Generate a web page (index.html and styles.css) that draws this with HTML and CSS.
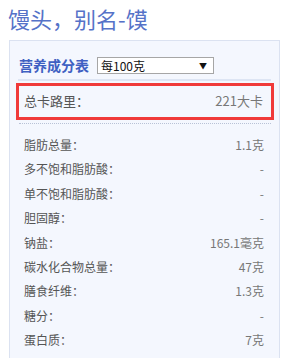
FILE: index.html
```html
<!DOCTYPE html>
<html lang="zh">
<head>
<meta charset="utf-8">
<link rel="stylesheet" href="styles.css">
</head>
<body>
<h1 class="title">馒头，别名-馍</h1>
<div class="card">
  <div class="card-head">
    <span class="head-label">营养成分表</span>
    <div class="select">
      <span>每100克</span>
      <span class="arrow">▼</span>
    </div>
  </div>
  <div class="total">
    <span class="label">总卡路里：</span>
    <span class="value">221大卡</span>
  </div>
  <div class="rows">
    <div class="row"><span class="label">脂肪总量：</span><span class="value">1.1克</span></div>
    <div class="row"><span class="label">多不饱和脂肪酸：</span><span class="value">-</span></div>
    <div class="row"><span class="label">单不饱和脂肪酸：</span><span class="value">-</span></div>
    <div class="row"><span class="label">胆固醇：</span><span class="value">-</span></div>
    <div class="row"><span class="label">钠盐：</span><span class="value">165.1毫克</span></div>
    <div class="row"><span class="label">碳水化合物总量：</span><span class="value">47克</span></div>
    <div class="row"><span class="label">膳食纤维：</span><span class="value">1.3克</span></div>
    <div class="row"><span class="label">糖分：</span><span class="value">-</span></div>
    <div class="row"><span class="label">蛋白质：</span><span class="value">7克</span></div>
  </div>
</div>
</body>
</html>
```
FILE: styles.css
```css
* { box-sizing: border-box; }
html, body { margin: 0; padding: 0; background: #fff; }
body {
  font-family: "Noto Sans CJK SC", "Noto Sans", sans-serif;
  width: 287px;
  height: 358px;
  overflow: hidden;
}
.title {
  margin: 0;
  padding: 4px 0 0 8px;
  height: 40px;
  font-size: 22px;
  line-height: 28px;
  font-weight: normal;
  color: #5572c8;
}
.card {
  margin-left: 9px;
  width: 271px;
  height: 318px;
  border: 1px solid #dbe2f1;
  border-bottom: none;
  background: #f4f7fe;
  padding: 0 8px;
}
.card-head {
  display: flex;
  align-items: center;
  padding: 16px 0 5px 1px;
  border-bottom: 2px solid #dde5f4;
}
.head-label {
  font-size: 14px;
  line-height: 17px;
  font-weight: bold;
  color: #3f60c2;
  margin-right: 8px;
}
.select {
  width: 117px;
  height: 17px;
  border: 1px solid #a6a6a6;
  background: #fff;
  display: flex;
  align-items: center;
  justify-content: space-between;
  padding: 0 6px 0 3px;
  font-size: 12px;
  line-height: 15px;
  color: #111;
}
.arrow { font-size: 8px; color: #111; }
.total {
  margin: 2px 0 0 -2px;
  width: 258px;
  height: 37px;
  border: 3px solid #f03a3a;
  display: flex;
  align-items: center;
  justify-content: space-between;
  padding: 0 8px 2px 5px;
  font-size: 13px;
  color: #555;
}
.total .value { color: #777; }
.rows {
  margin: 3px 0 0 1px;
  width: 252px;
  border-top: 1px dotted #b8c2d6;
  padding: 9px 7px 0 5px;
}
.row {
  display: flex;
  justify-content: space-between;
  height: 24.4px;
  line-height: 24.4px;
  font-size: 12px;
  color: #555;
}
.row .value { color: #777; }
```
